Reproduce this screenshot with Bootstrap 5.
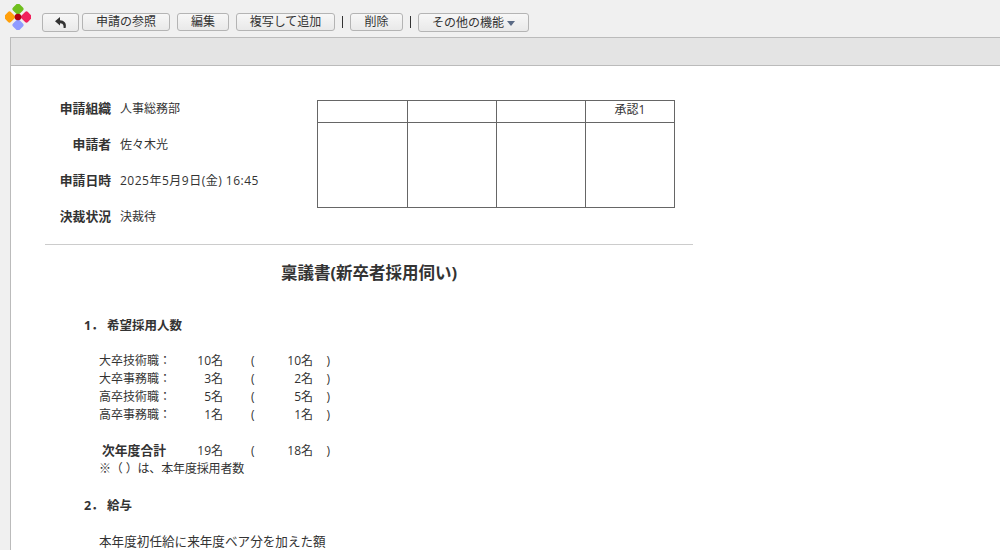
<!DOCTYPE html>
<html lang="ja">
<head>
<meta charset="utf-8">
<title>稟議書</title>
<link href="https://cdn.jsdelivr.net/npm/bootstrap@5.3.0/dist/css/bootstrap.min.css" rel="stylesheet">
<style>
html,body{height:550px;overflow:hidden;}
body{background:#f0f0f0;color:#333;font-family:"Open Sans","Noto Sans CJK JP",sans-serif;font-size:12px;line-height:18px;}
.topbar{height:37px;padding-left:5px;}
.logo-svg{width:26px;height:26px;margin-top:4px;margin-right:11px;flex:none;}
.tools{padding-top:13px;gap:7px;}
.tbtn{height:18px;padding:0 13px;border:1px solid #b4b4b4;border-radius:3px;background:linear-gradient(#f7f7f7,#e9e9e9);color:#333;font-size:12px;line-height:16px;white-space:nowrap;}
.tbtn-tall{height:19px;line-height:17px;}
.tbtn-back{width:37px;padding:0;margin-right:-4px;display:flex;align-items:center;justify-content:center;}
.tbtn-copy{width:99px;padding:0;}
.tbtn-del{width:53px;padding:0;}
.vsep{width:1px;height:12px;background:#333;margin-top:3px;}
.caret-d{display:inline-block;width:0;height:0;border-left:4px solid transparent;border-right:4px solid transparent;border-top:5px solid #5a6a85;margin-left:3px;vertical-align:1px;}
.panel{margin-left:10px;height:513px;background:#fff;border-left:1px solid #bbb;}
.band{height:29px;background:#e4e4e4;border-top:1px solid #bbb;border-bottom:1px solid #bbb;}
.sheet{width:648px;margin-left:34px;padding-top:34px;}
.meta-col{width:272px;}
.meta-row{height:36px;}
.meta-key{width:66px;text-align:right;font-weight:700;font-size:12.8px;line-height:17px;margin-right:9px;white-space:nowrap;}
.meta-val{line-height:17px;}
.meta-date{letter-spacing:.5px;}
.stamp{width:358px;height:108px;border-collapse:collapse;table-layout:fixed;font-size:12px;}
.stamp td{border:1px solid #666;padding:0;text-align:center;vertical-align:top;line-height:18px;}
.stamp .hd td{height:22px;}
.stamp .hd td:first-child{width:90px;}
.rule{height:1px;background:#ccc;}
.doc-title{font-size:16.5px;font-weight:700;line-height:24px;text-align:center;margin:16px 0 0 0;}
.sec-h{font-weight:700;margin:0;padding-left:39px;font-size:12.5px;display:flex;}
.sec-no{width:23px;flex:none;}
.sec-one{margin-top:32px;}
.sec-two{margin-top:19px;}
.figs{padding-left:54px;margin-top:17px;}
.figs-two{margin-top:18px;font-size:12.6px;white-space:nowrap;}
.fig-row{display:grid;grid-template-columns:72px 52px 28px 12px 50px 17px;height:18px;white-space:nowrap;}
.fig-row .n{text-align:right;}
.fig-b{font-weight:700;padding-left:3px;font-size:12.8px;line-height:17px;}
.fig-note{letter-spacing:-.15px;}
.gap18{height:18px;}
</style>
</head>
<body>
<div class="topbar d-flex">
  <svg class="logo-svg" viewBox="0 0 26 26">
    <rect x="8.5" y="0.5" width="9" height="9" rx="2" transform="rotate(45 13 5)" fill="#6fbf1e"/>
    <rect x="0" y="8.5" width="9" height="9" rx="2" transform="rotate(45 4.500 13)" fill="#ff9f0a"/>
    <rect x="17" y="8.5" width="9" height="9" rx="2" transform="rotate(45 21.500 13)" fill="#f0205c"/>
    <rect x="8.5" y="16.5" width="9" height="9" rx="2" transform="rotate(45 13 21)" fill="#8f9bff"/>
    <circle cx="13" cy="13" r="3.3" fill="#b00010"/>
  </svg>
  <div class="tools d-flex align-items-start">
    <button class="tbtn tbtn-tall tbtn-back" type="button" aria-label="戻る"><svg width="11" height="11" viewBox="0 0 11 11"><path d="M5 0 0 4.200l5 4.200V6.200c1.900 0 3 .8 3.400 2.400.2.700.2 1.500.2 2.400h2c.5-2 .4-4.400-.9-5.800C8.700 4.100 7 3.300 5 3.200z" fill="#333"/></svg></button>
    <button class="tbtn" type="button">申請の参照</button>
    <button class="tbtn" type="button">編集</button>
    <button class="tbtn tbtn-copy" type="button">複写して追加</button>
    <span class="vsep"></span>
    <button class="tbtn tbtn-del" type="button">削除</button>
    <span class="vsep"></span>
    <button class="tbtn tbtn-tall" type="button">その他の機能<span class="caret-d"></span></button>
  </div>
</div>
<div class="panel">
  <div class="band"></div>
  <div class="sheet">
    <div class="d-flex">
      <div class="meta-col">
        <div class="meta-row d-flex"><div class="meta-key">申請組織</div><div class="meta-val">人事総務部</div></div>
        <div class="meta-row d-flex"><div class="meta-key">申請者</div><div class="meta-val">佐々木光</div></div>
        <div class="meta-row d-flex"><div class="meta-key">申請日時</div><div class="meta-val meta-date">2025年5月9日(金) 16:45</div></div>
        <div class="meta-row d-flex"><div class="meta-key">決裁状況</div><div class="meta-val">決裁待</div></div>
      </div>
      <table class="stamp">
        <tr class="hd"><td></td><td></td><td></td><td>承認1</td></tr>
        <tr><td></td><td></td><td></td><td></td></tr>
      </table>
    </div>
    <div class="rule"></div>
    <h1 class="doc-title">稟議書(新卒者採用伺い)</h1>
    <p class="sec-h sec-one"><span class="sec-no">1．</span><span>希望採用人数</span></p>
    <div class="figs">
      <div class="fig-row"><span>大卒技術職：</span><span class="n">10名</span><span></span><span>(</span><span class="n">10名</span><span class="n">)</span></div>
      <div class="fig-row"><span>大卒事務職：</span><span class="n">3名</span><span></span><span>(</span><span class="n">2名</span><span class="n">)</span></div>
      <div class="fig-row"><span>高卒技術職：</span><span class="n">5名</span><span></span><span>(</span><span class="n">5名</span><span class="n">)</span></div>
      <div class="fig-row"><span>高卒事務職：</span><span class="n">1名</span><span></span><span>(</span><span class="n">1名</span><span class="n">)</span></div>
      <div class="gap18"></div>
      <div class="fig-row"><span class="fig-b">次年度合計</span><span class="n">19名</span><span></span><span>(</span><span class="n">18名</span><span class="n">)</span></div>
      <div class="fig-note">※（ ）は、本年度採用者数</div>
    </div>
    <p class="sec-h sec-two"><span class="sec-no">2．</span><span>給与</span></p>
    <div class="figs figs-two">本年度初任給に来年度ベア分を加えた額</div>
  </div>
</div>
<script src="https://cdn.jsdelivr.net/npm/bootstrap@5.3.0/dist/js/bootstrap.bundle.min.js"></script>
</body>
</html>
